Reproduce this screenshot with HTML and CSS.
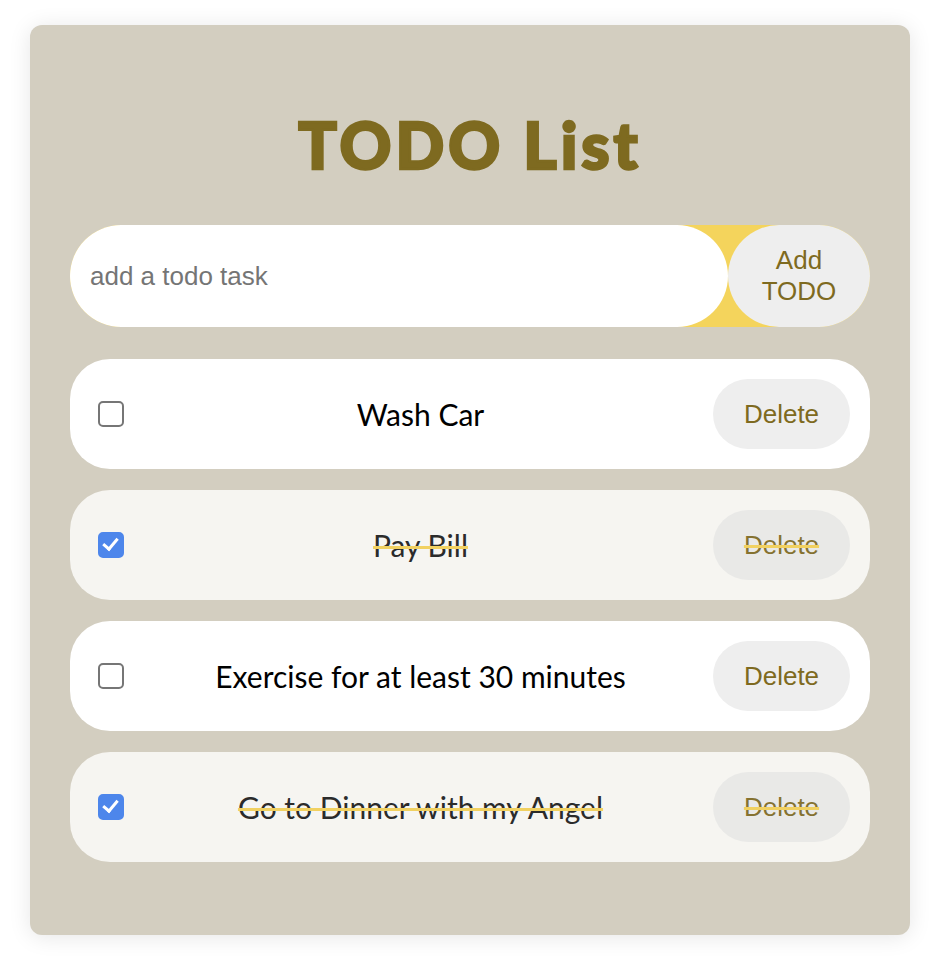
FILE: index.html
```html
<!DOCTYPE html>
<html lang="en">
<head>
<meta charset="utf-8">
<title>TODO List</title>
<link rel="stylesheet" href="styles.css">
</head>
<body>
<main class="card">
  <h1 class="title">TODO List</h1>
  <form class="add-form">
    <input class="add-input" type="text" placeholder="add a todo task">
    <button class="add-btn" type="button">Add TODO</button>
  </form>
  <ul class="todo-list">
    <li class="todo">
      <input class="check" type="checkbox">
      <span class="todo-text">Wash Car</span>
      <button class="del-btn" type="button">Delete</button>
    </li>
    <li class="todo done">
      <input class="check" type="checkbox" checked>
      <span class="todo-text">Pay Bill</span>
      <button class="del-btn" type="button">Delete</button>
    </li>
    <li class="todo">
      <input class="check" type="checkbox">
      <span class="todo-text">Exercise for at least 30 minutes</span>
      <button class="del-btn" type="button">Delete</button>
    </li>
    <li class="todo done">
      <input class="check" type="checkbox" checked>
      <span class="todo-text">Go to Dinner with my Angel</span>
      <button class="del-btn" type="button">Delete</button>
    </li>
  </ul>
</main>
</body>
</html>
```
FILE: styles.css
```css
* { box-sizing: border-box; }

html, body {
  margin: 0;
  padding: 0;
  background: #ffffff;
}

body {
  font-family: "Liberation Sans", Arial, sans-serif;
  padding: 25px 36px 33px 30px;
}

.card {
  width: 880px;
  background: #d3cec0;
  border-radius: 12px;
  box-shadow: 0 2px 22px rgba(0, 0, 0, 0.10);
  padding: 40px 40px 73px;
}

.title {
  margin: 40px 0 40px;
  text-align: center;
  font-family: Lato, "DejaVu Sans", sans-serif;
  font-weight: 900;
  font-size: 64px;
  line-height: 80px;
  letter-spacing: 4px;
  color: #7e6a20;
  -webkit-text-stroke: 2.5px #7e6a20;
}

.add-form {
  display: flex;
  height: 102px;
  background: #f4d45c;
  border-radius: 51px;
  margin: 0 0 32px;
}

.add-input {
  flex: 1;
  min-width: 0;
  border: none;
  outline: none;
  background: #ffffff;
  border-radius: 51px;
  padding: 0 20px;
  font-family: "Liberation Sans", Arial, sans-serif;
  font-size: 26px;
  color: #333;
}

.add-input::placeholder {
  color: #757575;
}

.add-btn {
  width: 142px;
  border: none;
  background: #eeeeee;
  border-radius: 51px;
  font-family: "Liberation Sans", Arial, sans-serif;
  font-size: 26px;
  line-height: 31px;
  color: #7e6a20;
  padding: 0 28px;
  text-align: center;
}

.todo-list {
  list-style: none;
  margin: 0;
  padding: 0;
  display: flex;
  flex-direction: column;
  gap: 21px;
}

.todo {
  display: flex;
  align-items: center;
  height: 110px;
  background: #ffffff;
  border-radius: 40px;
  padding: 0 20px 0 28px;
}

.todo.done {
  background: #f6f5f1;
}

.check {
  appearance: none;
  -webkit-appearance: none;
  margin: 0;
  width: 26px;
  height: 26px;
  flex: none;
  border: 2.5px solid #767676;
  border-radius: 5px;
  background: #ffffff;
  position: relative;
}

.check:checked {
  border-color: #4d86eb;
  background: #4d86eb;
}

.check:checked::before {
  content: "";
  position: absolute;
  left: 6px;
  top: 1px;
  width: 6px;
  height: 12px;
  border-right: 3.5px solid #ffffff;
  border-bottom: 3.5px solid #ffffff;
  transform: rotate(40deg);
}

.todo-text {
  flex: 1;
  text-align: center;
  font-family: Lato, "Open Sans", sans-serif;
  font-size: 30px;
  color: #000000;
  padding-left: 4px;
}

.done .todo-text {
  color: #2b2b2b;
  text-decoration: line-through #f1d161 3px;
}

.del-btn {
  width: 137px;
  height: 70px;
  flex: none;
  border: none;
  border-radius: 35px;
  background: #eeeeee;
  font-family: "Liberation Sans", Arial, sans-serif;
  font-size: 26px;
  color: #7e6a20;
}

.done .del-btn {
  background: #e9e9e7;
  color: #857230;
  text-decoration: line-through #f1d161 3px;
}
```
